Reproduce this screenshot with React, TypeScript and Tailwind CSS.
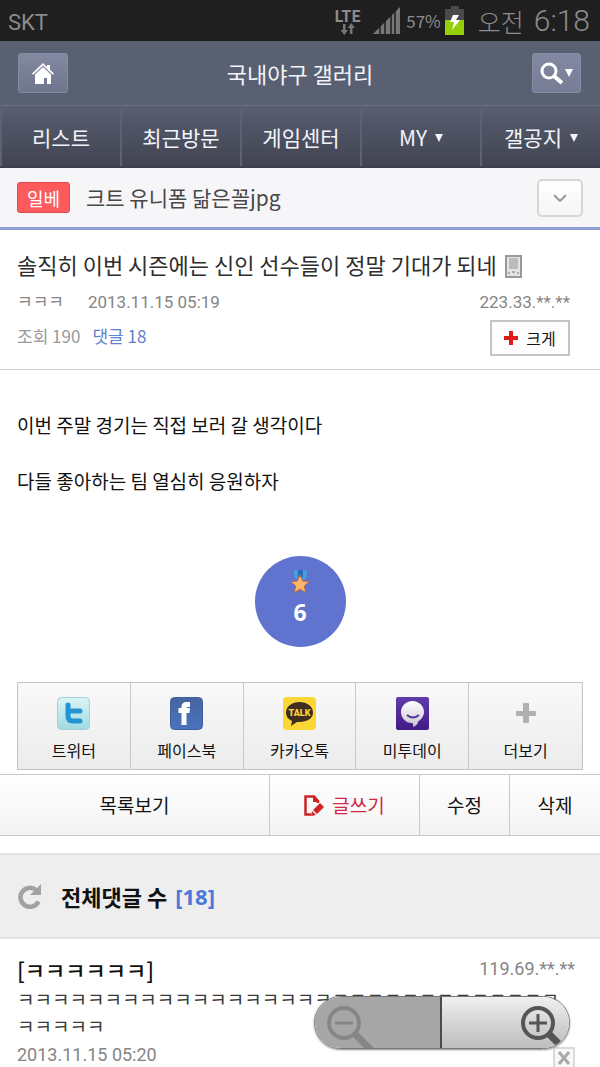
import React from 'react';
import clsx from 'clsx';

const menus = [
  { label: '리스트' },
  { label: '최근방문' },
  { label: '게임센터' },
  { label: 'MY', more: true },
  { label: '갤공지', more: true },
];

const Caret = ({ className }: { className?: string }) => (
  <svg viewBox="0 0 8 8" className={clsx('size-2 fill-current', className)} aria-hidden="true">
    <path d="M0 0h8L4 8z" />
  </svg>
);

const StatusBar = () => (
  <div className="flex h-[41px] items-center bg-[#1f1f1f] pl-2 pr-[10px] text-[#8c8c8c]">
    <span className="flex-1 pt-1 font-['Roboto',sans-serif] text-[22px] leading-8">SKT</span>
    <div className="mr-3 flex flex-col items-center">
      <span className="text-base font-semibold leading-4">LTE</span>
      <svg viewBox="0 0 16 12" className="h-3 w-4" fill="#777" aria-hidden="true">
        <path d="M3 1h2.500v6H8l-3.700 5L.5 7H3zM10 11h2.500V5H15l-3.700-5L7.500 5H10z" />
      </svg>
    </div>
    <svg viewBox="0 0 27 27" className="mr-[6px] size-[27px]" aria-hidden="true">
      <path fill="#777" d="M0 27 27 0v27z" />
      <path stroke="#1f1f1f" strokeWidth="1.500" d="M7 18v9M12 13v15M18 7v20M22 3v24" />
    </svg>
    <span className="mr-1 text-[17px]">57%</span>
    <svg viewBox="0 0 19 29" className="mr-[14px] h-[29px] w-[19px]" aria-hidden="true">
      <path fill="#4a4a4a" d="M6 0h8v3h5v12H0V3h6z" />
      <path fill="#94cf08" d="M0 14h19v15H0z" />
      <path fill="#fff" d="M8 9h6l-3 5h4L7 24l2-8H5z" />
    </svg>
    <span className="mr-[10px] text-[25px] font-light leading-10">오전</span>
    <span className="font-['Roboto',sans-serif] text-[30px] font-light leading-10">6:18</span>
  </div>
);

const Header = () => (
  <header className="bg-[#596071] text-[#f3f4fb]">
    <div className="flex h-16 items-center justify-between pl-[18px] pr-[19px]">
      <button
        type="button"
        aria-label="홈"
        className="flex h-10 w-[50px] items-center justify-center rounded-[3px] border border-[#848ca2] bg-linear-to-b from-[#8389a0] to-[#70768c]"
      >
        <svg viewBox="0 0 22 21" className="h-[21px] w-[22px] fill-white" aria-hidden="true">
          <path d="M11 0 0 10.500 1.200 11.700 11 2.500l9.800 9.200L22 10.500 18 6.700V2h-3v2z" />
          <path d="M11 4 3 11.500V21h9v-6h3v6h4v-9.500z" />
        </svg>
      </button>
      <h1 className="text-[22px] leading-8">국내야구 갤러리</h1>
      <button
        type="button"
        aria-label="검색"
        className="flex h-10 w-[49px] items-center justify-center gap-[2px] rounded-[3px] border border-[#848ca2] bg-linear-to-b from-[#8389a0] to-[#777d96] text-white"
      >
        <svg viewBox="0 0 23 23" className="size-[23px]" fill="none" stroke="currentColor" aria-hidden="true">
          <circle cx="9" cy="9" r="7" strokeWidth="3" />
          <path d="m14 14 8 7" strokeWidth="4" />
        </svg>
        <Caret />
      </button>
    </div>
    <nav className="grid h-[63px] grid-cols-5 border-b-2 border-[#3c3d4a] bg-linear-to-b from-[#596071] to-[#414351]">
      {menus.map((menu) => (
        <a
          key={menu.label}
          href="#"
          className="flex items-center justify-center gap-2 border-l-2 border-t border-l-[#5d6273] border-t-[#6c7180] pt-1 text-[21px]"
        >
          {menu.label}
          {menu.more && <Caret />}
        </a>
      ))}
    </nav>
  </header>
);

const RelatedBar = () => (
  <div className="flex h-[62px] items-center border-b-3 border-[#8f9fd4] bg-[#f6f6f9] pl-[17px] pr-[17px]">
    <span className="mr-4 flex h-[31px] w-[53px] items-center justify-center rounded-[3px] border border-[#dc4c50] bg-[#fc5b5e] text-lg text-white">
      일베
    </span>
    <a href="#" className="flex-1 text-[21px] text-[#484848]">
      크트 유니폼 닮은꼴jpg
    </a>
    <button
      type="button"
      aria-label="펼치기"
      className="flex h-[38px] w-[46px] items-center justify-center rounded-[5px] border-2 border-[#d6d6d6] bg-linear-to-b from-white to-[#f5f5f5]"
    >
      <svg viewBox="0 0 14 8" className="h-2 w-[14px]" fill="none" stroke="#999" strokeWidth="2" aria-hidden="true">
        <path d="m1 1 6 6 6-6" />
      </svg>
    </button>
  </div>
);

const PostHead = () => (
  <div className="h-[140px] border-b border-[#d0d0d0] pl-[17px] pr-[30px] pt-4">
    <div className="mb-[2px] flex items-center gap-2">
      <h2 className="text-[22px] leading-9 text-[#2e2e2e]">솔직히 이번 시즌에는 신인 선수들이 정말 기대가 되네</h2>
      <svg viewBox="0 0 17 23" className="mt-1 h-[23px] w-[17px]" aria-hidden="true">
        <path fill="#e4e4e4" stroke="#999" strokeWidth="2" d="M1 1h15v21H1z" />
        <path fill="#bcbcbc" d="M4 3h9v11H4z" />
        <path fill="#aaa" d="M3 17h2v2H3zM7 16h3v2H7zM12 17h2v2h-2z" />
      </svg>
    </div>
    <div className="flex justify-between text-[17px] text-[#858585]">
      <div className="leading-[34px]">
        <p>
          <span className="mr-6">ㅋㅋㅋ</span>
          <span className="font-['Roboto']">2013.11.15 05:19</span>
        </p>
        <p>
          <span className="mr-3 text-[#9a9a9a]">조회 190</span>
          <a href="#" className="text-[#5f83cc]">댓글 18</a>
        </p>
      </div>
      <div className="flex flex-col items-end">
        <span className="font-['Roboto'] leading-9">223.33.**.**</span>
        <button
          type="button"
          className="flex h-9 w-20 items-center justify-center gap-2 border-2 border-[#c4c4c4] bg-[#fdfdfd] text-base text-[#161616]"
        >
          <svg viewBox="0 0 14 14" className="size-[14px] fill-[#df1b1b]" aria-hidden="true">
            <path d="M5 0h4v5h5v4H9v5H5V9H0V5h5z" />
          </svg>
          크게
        </button>
      </div>
    </div>
  </div>
);

const PostBody = () => (
  <div className="px-[17px] pt-[41px] text-[19px] leading-7 text-[#111]">
    <p className="mb-7">이번 주말 경기는 직접 보러 갈 생각이다</p>
    <p>다들 좋아하는 팀 열심히 응원하자</p>
    <button
      type="button"
      aria-label="추천 6"
      className="mx-auto mb-[35px] mt-[61px] flex size-[91px] flex-col items-center rounded-full bg-[#6073cf] pt-[13px] text-white"
    >
      <svg viewBox="0 0 20 25" className="h-[25px] w-5" aria-hidden="true">
        <path fill="#4b9bdc" d="M4 1h13v7l-4 3H8L4 8z" />
        <path fill="#276fba" d="M8 1h5v7H8z" />
        <path
          fill="#ffb466"
          stroke="#a86a54"
          strokeWidth="1"
          d="m10 6 2.700 6 6.600.6-5 4.500 1.500 6.600L10 20.400l-5.800 3.300 1.500-6.600-5-4.500 6.600-.6z"
        />
      </svg>
      <span className="mt-1 font-['Noto_Sans'] text-[23px] font-bold">6</span>
    </button>
  </div>
);

const TwitterIcon = () => (
  <svg viewBox="0 0 33 33" className="size-[33px]" aria-hidden="true">
    <defs>
      <linearGradient id="tw" x2="0" y2="1">
        <stop stopColor="#dcf4f5" />
        <stop offset="1" stopColor="#9edbe2" />
      </linearGradient>
    </defs>
    <rect x=".5" y=".5" width="32" height="32" rx="4" fill="url(#tw)" stroke="#a5cfd4" />
    <path d="M11 8v11q0 5 5 5h7M11 14h12" fill="none" stroke="#2295d2" strokeWidth="5" strokeLinecap="round" />
  </svg>
);

const FacebookIcon = () => (
  <svg viewBox="0 0 33 33" className="size-[33px]" aria-hidden="true">
    <defs>
      <linearGradient id="fb" x2="0" y2="1">
        <stop stopColor="#46659f" />
        <stop offset="1" stopColor="#4b72bf" />
      </linearGradient>
    </defs>
    <rect x=".5" y=".5" width="32" height="32" rx="4" fill="url(#fb)" stroke="#3e5f9e" />
    <path fill="#fff" d="M11.500 28V16H8.500v-5h3v-1c0-3.500 2-5 5-5H20v5h-1.500c-1.500 0-2 .5-2 1H20l-.5 5h-3v12z" />
  </svg>
);

const KakaoIcon = () => (
  <svg viewBox="0 0 33 33" className="size-[33px]" aria-hidden="true">
    <rect width="33" height="33" rx="4" fill="#fad737" />
    <path fill="#412c22" d="M16.500 5C9 5 3 9.500 3 15.500c0 4 2.500 7 6 8.500l-1 5 6-4h2.500C24 25 30 21.500 30 15.500S24 5 16.500 5" />
    <text
      x="16.500"
      y="19"
      textAnchor="middle"
      fontSize="9"
      fontWeight="900"
      fontFamily="Roboto, sans-serif"
      fill="#fad737"
    >
      TALK
    </text>
  </svg>
);

const Me2dayIcon = () => (
  <svg viewBox="0 0 33 33" className="size-[33px]" aria-hidden="true">
    <defs>
      <linearGradient id="me" x2="0" y2="1">
        <stop stopColor="#5f3cac" />
        <stop offset="1" stopColor="#431b87" />
      </linearGradient>
      <linearGradient id="me-face" x2="0" y2="1">
        <stop stopColor="#fff" />
        <stop offset="1" stopColor="#c9c5d2" />
      </linearGradient>
    </defs>
    <rect width="33" height="33" rx="2" fill="url(#me)" />
    <path fill="url(#me-face)" d="M16.500 4C10 4 5 9 5 15s4.500 11 11 11c1 0 1.500 3 1 4 3-1 5-3 5-5.500 3-1.500 6-5.500 6-9.500 0-6-5-11-11.500-11" />
    <path d="M11 18q6 5 12 0" fill="none" stroke="#55349c" strokeWidth="2" />
  </svg>
);

const PlusIcon = () => (
  <svg viewBox="0 0 33 33" className="size-[33px]" fill="#b0b0b0" aria-hidden="true">
    <path d="M14 7q0-1 1-1h4q1 0 1 1v7h6q1 0 1 1v3q0 1-1 1h-6v6q0 1-1 1h-4q-1 0-1-1v-6H8q-1 0-1-1v-3q0-1 1-1h6z" />
  </svg>
);

const shares = [
  { label: '트위터', icon: <TwitterIcon /> },
  { label: '페이스북', icon: <FacebookIcon /> },
  { label: '카카오톡', icon: <KakaoIcon /> },
  { label: '미투데이', icon: <Me2dayIcon /> },
  { label: '더보기', icon: <PlusIcon /> },
];

const ShareBar = () => (
  <div className="mx-[17px] grid h-[88px] grid-cols-5 divide-x divide-[#c8c8c8] border border-[#c4c4c4] bg-linear-to-b from-[#f9f9f9] to-[#ececec]">
    {shares.map((share) => (
      <button
        key={share.label}
        type="button"
        className="flex flex-col items-center gap-2 pt-[14px] text-base leading-6 text-[#111]"
      >
        {share.icon}
        {share.label}
      </button>
    ))}
  </div>
);

const actionClass = 'flex items-center justify-center bg-linear-to-b from-white to-[#f3f3f3]';

const PostActions = () => (
  <div className="mt-1 grid h-[62px] grid-cols-[9fr_5fr_3fr_3fr] divide-x divide-[#c8c8c8] border-y border-[#c8c8c8] text-[19px] text-[#111]">
    <a href="#" className={actionClass}>목록보기</a>
    <a href="#" className={clsx(actionClass, 'gap-2 text-[#d32547]')}>
      <svg viewBox="0 0 20 21" className="h-[21px] w-5" aria-hidden="true">
        <path fill="none" stroke="#cf2222" strokeWidth="2.500" d="M7 19.500H1.500v-18H10l4 4.500v2" />
        <path fill="#cf2222" d="M9 0v7h6zM16 8l4 4-7 7-4-4zM8 16l4 4-5 1z" />
      </svg>
      글쓰기
    </a>
    <a href="#" className={actionClass}>수정</a>
    <a href="#" className={actionClass}>삭제</a>
  </div>
);

const Comments = () => (
  <section className="mt-[17px]">
    <div className="flex h-[86px] items-center border-y-2 border-[#e2e2e2] bg-[#eee] pl-[18px]">
      <button type="button" aria-label="새로고침" className="mr-[19px]">
        <svg viewBox="0 0 24 25" className="h-[25px] w-6" aria-hidden="true">
          <path d="M20.500 17.500A9.500 9.500 0 1 1 18 6" fill="none" stroke="#a2a2a2" strokeWidth="4.500" />
          <path fill="#a2a2a2" d="M23 0v11H12z" />
        </svg>
      </button>
      <h3 className="flex gap-2 text-[22px] font-bold text-[#111]">
        전체댓글 수 <span className="font-['Noto_Sans'] text-[#4c78d8]">[18]</span>
      </h3>
    </div>
    <article className="pl-[17px] pr-[25px] pt-4">
      <div className="flex items-center justify-between leading-7">
        <strong className="text-[22px] font-medium leading-7 text-[#111]">[ㅋㅋㅋㅋㅋㅋ]</strong>
        <span className="font-['Roboto'] text-lg leading-7 text-[#858585]">119.69.**.**</span>
      </div>
      <p className="my-[2px] break-all pr-2 text-[19px] leading-[27px] text-[#3a3a3a]">
        ㅋㅋㅋㅋㅋㅋㅋㅋㅋㅋㅋㅋㅋㅋㅋㅋㅋㅋㅋㅋㅋㅋㅋㅋㅋㅋㅋㅋㅋㅋㅋㅋㅋㅋㅋㅋ
      </p>
      <div className="flex items-end justify-between">
        <span className="font-['Roboto'] text-lg leading-7 text-[#858585]">2013.11.15 05:20</span>
        <button
          type="button"
          aria-label="댓글 삭제"
          className="flex size-[22px] items-center justify-center border-2 border-[#dadada] bg-[#f8f8f8]"
        >
          <svg viewBox="0 0 12 14" className="h-[14px] w-3" stroke="#aaa" strokeWidth="3" aria-hidden="true">
            <path d="m1 1 10 12M11 1 1 13" />
          </svg>
        </button>
      </div>
    </article>
  </section>
);

const ZoomControls = () => (
  <div className="fixed bottom-[18px] right-[30px] grid h-[53px] w-64 grid-cols-2 overflow-hidden rounded-full border border-[#777] shadow-[0_1px_2px_#888]">
    <button type="button" aria-label="축소" className="border-r-2 border-[#4a4a4a] bg-[#a6a6a6] pl-3 pt-[9px]">
      <svg viewBox="0 0 48 44" className="h-11 w-12" fill="none" stroke="#868686" aria-hidden="true">
        <circle cx="17" cy="17" r="15" strokeWidth="4" />
        <path d="m28 28 18 18" strokeWidth="7" />
        <path d="M8 17h18" strokeWidth="3" />
      </svg>
    </button>
    <button
      type="button"
      aria-label="확대"
      className="flex justify-end bg-linear-to-b from-[#f0f0f0] via-[#d4d4d4] to-[#bcbcbc] pt-[9px]"
    >
      <svg viewBox="0 0 48 44" className="h-11 w-12" fill="none" stroke="#555" aria-hidden="true">
        <circle cx="17" cy="17" r="15" strokeWidth="4" />
        <path d="m28 28 18 18" strokeWidth="7" />
        <path d="M8 17h18M17 8v18" strokeWidth="3" />
      </svg>
    </button>
  </div>
);

const App = () => (
  <div className="min-h-screen bg-white font-['Noto_Sans_CJK_KR',sans-serif]">
    <StatusBar />
    <Header />
    <RelatedBar />
    <main>
      <PostHead />
      <PostBody />
      <ShareBar />
      <PostActions />
      <Comments />
    </main>
    <ZoomControls />
  </div>
);

export default App;
